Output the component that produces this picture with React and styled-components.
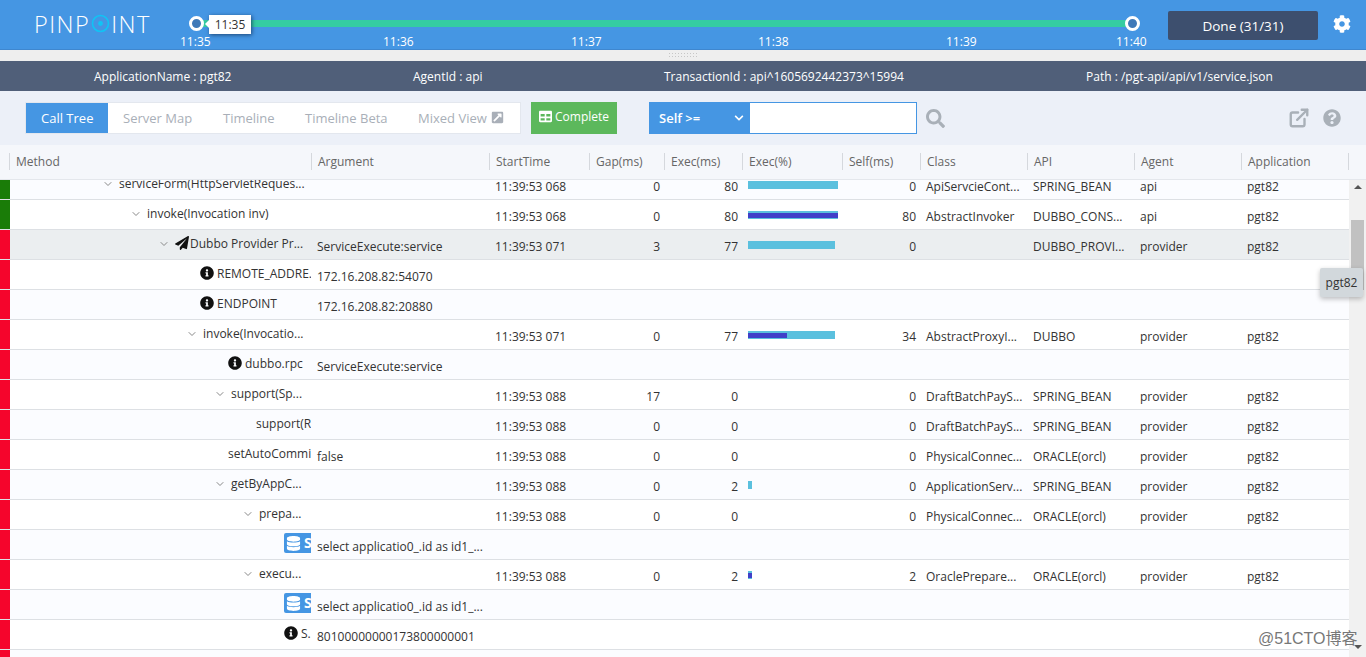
import styled, { createGlobalStyle } from 'styled-components'
import {
	FaCog,
	FaChevronDown,
	FaDatabase,
	FaExternalLinkSquareAlt,
	FaInfoCircle,
	FaPaperPlane,
	FaQuestionCircle,
	FaSearch,
	FaTable,
} from 'react-icons/fa'
import { FiExternalLink, FiChevronDown } from 'react-icons/fi'

const GlobalStyle = createGlobalStyle`
	* { box-sizing: border-box; }
	html, body { margin: 0; height: 100%; overflow: hidden; }
	body { font-family: 'Open Sans', 'Liberation Sans', sans-serif; font-size: 12px; color: #333; background: #fff; }
	#root { height: 100%; }
`

const COLUMNS = '302px 178px 100px 75px 78px 100px 78px 107px 107px 107px 107px'

const Page = styled.div`
	height: 100vh;
	display: flex;
	flex-direction: column;
	position: relative;
	overflow: hidden;
`

const TopBar = styled.header`
	height: 50px;
	flex: none;
	display: flex;
	background: #4596e3;
	border-bottom: 1px solid #3f87cf;
	padding-left: 35px;
`

const Logo = styled.div`
	width: 141px;
	height: 49px;
	display: flex;
	align-items: center;
	padding-bottom: 2px;
	margin-left: -1px;
	margin-right: 1px;
	color: #fff;
	font-family: 'Open Sans', sans-serif;
	font-weight: 300;
	font-size: 23.5px;
	letter-spacing: 1.45px;
	svg {
		margin: 0 1px;
	}
`

const Slider = styled.div`
	width: 977px;
	padding-top: 20px;
`

const Track = styled.div`
	position: relative;
	height: 7px;
	margin: 0 20px;
	width: 937px;
	background: #35cca2;
`

const Handle = styled.span`
	position: absolute;
	top: -4px;
	left: ${(props) => (props.$end ? '929px' : '-7px')};
	width: 15px;
	height: 15px;
	border-radius: 50%;
	border: 3px solid #fff;
	background: #3f79b8;
`

const TimeTip = styled.div`
	position: absolute;
	top: -5px;
	left: 13px;
	width: 42px;
	height: 19px;
	background: #fff;
	color: #333;
	font-size: 12px;
	line-height: 19px;
	text-align: center;
	box-shadow: 1px 1px 4px rgba(20, 50, 90, 0.8);
	&::before {
		content: '';
		position: absolute;
		left: -4px;
		top: 5px;
		border-style: solid;
		border-width: 4px 4px 4px 0;
		border-color: transparent #fff transparent transparent;
	}
`

const Ticks = styled.div`
	display: grid;
	grid-template-columns: 203px 188px 187px 188px 170px 40px;
	margin: 7px 0 0 4px;
	color: #fff;
	font-size: 12px;
	line-height: 16px;
`

const DoneButton = styled.button`
	width: 150px;
	height: 29px;
	margin: 11px 0 0 15px;
	border: none;
	border-radius: 2px;
	background: #3d4f6e;
	color: #fff;
	font-family: inherit;
	font-size: 13.5px;
`

const Gear = styled(FaCog)`
	margin: 15px 0 0 15px;
	color: #fff;
	font-size: 18px;
`

const Grabber = styled.div`
	height: 11px;
	flex: none;
	display: flex;
	justify-content: center;
	padding-top: 2px;
	background: #eeeeee;
	&::after {
		content: '';
		width: 31px;
		height: 6px;
		background-image: radial-gradient(#c6c6c6 1px, transparent 1px);
		background-size: 3px 3px;
	}
`

const InfoBar = styled.div`
	height: 30px;
	flex: none;
	display: grid;
	grid-template-columns: 319px 251px 422px auto;
	align-items: center;
	padding-left: 94px;
	background: #505f79;
	color: #fff;
	font-size: 12px;
`

const Toolbar = styled.div`
	height: 54px;
	flex: none;
	display: flex;
	align-items: flex-start;
	padding: 11px 25px 0 25px;
	background: #ecf0f8;
`

const Tabs = styled.div`
	width: 496px;
	height: 32px;
	display: flex;
	background: #fff;
	border: 1px solid #e3e7ee;
`

const Tab = styled.div`
	width: ${(props) => props.$width}px;
	padding-left: ${(props) => (props.$active ? 15 : props.$pad)}px;
	line-height: 31px;
	font-size: 13px;
	color: ${(props) => (props.$active ? '#fff' : '#a9afb8')};
	background: ${(props) => (props.$active ? '#4596e3' : 'transparent')};
	white-space: nowrap;
	svg {
		margin-left: 4px;
		font-size: 13px;
		vertical-align: -1px;
	}
`

const CompleteButton = styled.div`
	width: 86px;
	height: 32px;
	margin-left: 10px;
	padding-left: 8px;
	display: flex;
	gap: 3px;
	align-items: center;
	padding-bottom: 3px;
	background: #5cb85c;
	color: #fff;
	font-size: 12px;
`

const FilterSelect = styled.div`
	width: 101px;
	height: 32px;
	margin-left: 32px;
	padding: 0 6px 0 10px;
	display: flex;
	align-items: center;
	justify-content: space-between;
	background: #4596e3;
	color: #fff;
	font-size: 13px;
	font-weight: 600;
	svg {
		font-size: 10px;
	}
`

const FilterInput = styled.input`
	width: 167px;
	height: 32px;
	border: 1px solid #4596e3;
	border-left: none;
	background: #fff;
	outline: none;
`

const SearchIcon = styled(FaSearch)`
	margin: 7px 0 0 9px;
	font-size: 19px;
	color: #a9b0b8;
`

const RightIcons = styled.div`
	margin-left: auto;
	margin-top: 5px;
	padding-right: 0;
	display: flex;
	align-items: center;
	gap: 13px;
	color: #a9b0b8;
`

const GridHeader = styled.div`
	height: 35px;
	flex: none;
	display: grid;
	grid-template-columns: ${COLUMNS};
	margin: 0;
	padding-left: 10px;
	padding-right: 17px;
	background: #f5f7fb;
	border-bottom: 1px solid #e4e7ec;
`

const HeaderCell = styled.div`
	margin-top: 8px;
	height: 17px;
	margin-left: -1px;
	padding-left: 6px;
	border-left: 1px solid #d5d8dd;
	color: #666;
	font-size: 12px;
	line-height: 17px;
	&:last-child {
		border-right: 1px solid #d5d8dd;
	}
`

const GridBody = styled.div`
	flex: 1;
	min-height: 0;
	display: flex;
	overflow: hidden;
`

const RowList = styled.div`
	flex: 1;
	margin-top: -10px;
`

const Row = styled.div`
	height: 30px;
	display: grid;
	grid-template-columns: 10px ${COLUMNS};
	border-bottom: 1px solid #dde0e4;
	background: ${(props) => (props.$selected ? '#ebeef0' : props.$tint ? '#fbfcff' : '#fff')};
`

const Marker = styled.div`
	margin-bottom: -1px;
	background: ${(props) => (props.$ok ? '#1a7c08' : '#f5052c')};
	border-bottom: 1px solid #dde0e4;
`

const Cell = styled.div`
	padding: 9px 5px 0;
	line-height: 16px;
	font-size: 12px;
	color: #333;
	white-space: nowrap;
	overflow: hidden;
	text-align: ${(props) => (props.$right ? 'right' : 'left')};
`

const MethodCell = styled.div`
	padding: 6px 0 0 ${(props) => props.$indent}px;
	margin-right: 1px;
	display: flex;
	align-items: flex-start;
	line-height: 16px;
	font-size: 12px;
	color: #333;
	white-space: nowrap;
	overflow: hidden;
`

const Toggle = styled(FiChevronDown)`
	flex: none;
	width: 12px;
	height: 12px;
	margin: 2px 5px 0 0;
	color: #888;
`

const RowIcon = styled.span`
	flex: none;
	width: ${(props) => props.$width}px;
	font-size: 14px;
	line-height: 14px;
	color: #111;
`

const SqlBadge = styled.span`
	flex: none;
	height: 20px;
	margin-top: -3px;
	padding: 0 2px;
	display: inline-flex;
	align-items: center;
	gap: 3px;
	border-radius: 2px;
	background: #4596e3;
	color: #fff;
	font-weight: 700;
	font-size: 14px;
	svg {
		font-size: 15px;
	}
`

const BarCell = styled.div`
	padding: 11px 0 0 5px;
`

const Bar = styled.div`
	height: 8px;
	padding-top: 2px;
	background: #5bc0de;
`

const BarSelf = styled.div`
	height: 5px;
	background: #4040c8;
`

const Scrollbar = styled.div`
	width: 17px;
	flex: none;
	display: flex;
	flex-direction: column;
	align-items: center;
	background: #f1f1f1;
`

const ArrowUp = styled.span`
	margin-top: 5px;
	border-style: solid;
	border-width: 0 4px 4px 4px;
	border-color: transparent transparent #555 transparent;
`

const ArrowDown = styled.span`
	margin-top: auto;
	margin-bottom: 8px;
	border-style: solid;
	border-width: 4px 4px 0 4px;
	border-color: #555 transparent transparent transparent;
`

const Thumb = styled.div`
	width: 13px;
	height: 70px;
	margin-top: 31px;
	background: #c1c1c1;
`

const CellTip = styled.div`
	position: absolute;
	top: 268px;
	left: 1320px;
	width: 43px;
	height: 29px;
	border-radius: 2px;
	background: #d2d8dc;
	box-shadow: 0 2px 5px rgba(0, 0, 0, 0.25);
	color: #333;
	font-size: 12px;
	line-height: 29px;
	text-align: center;
`

const Watermark = styled.div`
	position: absolute;
	top: 629px;
	left: 1258px;
	font-family: 'Liberation Sans', 'Noto Sans CJK SC', sans-serif;
	font-size: 16px;
	line-height: 19px;
	color: #777;
	text-shadow: 0 0 2px #fff;
`

const ticks = ['11:35', '11:36', '11:37', '11:38', '11:39', '11:40']

const infoItems = [
	'ApplicationName : pgt82',
	'AgentId : api',
	'TransactionId : api^1605692442373^15994',
	'Path : /pgt-api/api/v1/service.json',
]

const tabs = [
	{ name: 'Call Tree', width: 82, active: true },
	{ name: 'Server Map', width: 100, pad: 15 },
	{ name: 'Timeline', width: 82, pad: 15 },
	{ name: 'Timeline Beta', width: 113, pad: 15 },
	{ name: 'Mixed View', width: 117, pad: 15, link: true },
]

const headers = ['Method', 'Argument', 'StartTime', 'Gap(ms)', 'Exec(ms)', 'Exec(%)', 'Self(ms)', 'Class', 'API', 'Agent', 'Application']

const SQL_ARG = 'select applicatio0_.id as id1_...'
const leaf = (text, indent, arg, icon = 'info') => ({ text, indent, arg, icon, leaf: true })
const call = (text, indent, time, gap, exec, self, cls, api, agent, extra = {}) => ({
	text,
	indent,
	time: `11:39:53 ${time}`,
	gap,
	exec,
	self,
	cls,
	api,
	agent,
	app: 'pgt82',
	toggle: true,
	...extra,
})

const rows = [
	call('serviceForm(HttpServletReques...', 92, '068', 0, 80, 0, 'ApiServcieCont...', 'SPRING_BEAN', 'api', { ok: true, bar: 90, own: 0 }),
	call('invoke(Invocation inv)', 120, '068', 0, 80, 80, 'AbstractInvoker', 'DUBBO_CONS...', 'api', { ok: true, bar: 90, own: 90 }),
	call('Dubbo Provider Pr...', 148, '071', 3, 77, 0, '', 'DUBBO_PROVI...', 'provider', {
		bar: 87,
		own: 0,
		selected: true,
		arg: 'ServiceExecute:service',
		plane: true,
	}),
	leaf('REMOTE_ADDRE.', 190, '172.16.208.82:54070'),
	leaf('ENDPOINT', 190, '172.16.208.82:20880'),
	call('invoke(Invocatio...', 176, '071', 0, 77, 34, 'AbstractProxyI...', 'DUBBO', 'provider', { bar: 87, own: 39 }),
	leaf('dubbo.rpc', 218, 'ServiceExecute:service'),
	call('support(Sp...', 204, '088', 17, 0, 0, 'DraftBatchPayS...', 'SPRING_BEAN', 'provider'),
	call('support(R', 246, '088', 0, 0, 0, 'DraftBatchPayS...', 'SPRING_BEAN', 'provider', { toggle: false }),
	call('setAutoCommi', 218, '088', 0, 0, 0, 'PhysicalConnec...', 'ORACLE(orcl)', 'provider', { toggle: false, arg: 'false' }),
	call('getByAppC...', 204, '088', 0, 2, 0, 'ApplicationServ...', 'SPRING_BEAN', 'provider', { bar: 4, own: 0 }),
	call('prepa...', 232, '088', 0, 0, 0, 'PhysicalConnec...', 'ORACLE(orcl)', 'provider'),
	leaf('SQL', 274, SQL_ARG, 'sql'),
	call('execu...', 232, '088', 0, 2, 2, 'OraclePrepare...', 'ORACLE(orcl)', 'provider', { bar: 4, own: 4 }),
	leaf('SQL', 274, SQL_ARG, 'sql'),
	leaf('S.', 274, '80100000000173800000001'),
	{ empty: true },
]

const MethodContent = ({ row }) => {
	if (row.empty) return null
	if (row.icon === 'sql') {
		return (
			<SqlBadge>
				<FaDatabase />
				{row.text}
			</SqlBadge>
		)
	}
	return (
		<>
			{row.toggle && <Toggle />}
			{row.plane && (
				<RowIcon $width={15}>
					<FaPaperPlane />
				</RowIcon>
			)}
			{row.icon === 'info' && (
				<RowIcon $width={17}>
					<FaInfoCircle />
				</RowIcon>
			)}
			{row.text}
		</>
	)
}

const App = () => {
	return (
		<Page>
			<GlobalStyle />
			<TopBar>
				<Logo>
					PINP
					<svg width="19" height="19" viewBox="0 0 19 19">
						<circle cx="9.5" cy="9.5" r="8" fill="none" stroke="#10c4f5" strokeWidth="1.6" />
						<circle cx="9.5" cy="9.5" r="2.4" fill="#10c4f5" />
					</svg>
					INT
				</Logo>
				<Slider>
					<Track>
						<Handle />
						<Handle $end />
						<TimeTip>11:35</TimeTip>
					</Track>
					<Ticks>
						{ticks.map((tick) => (
							<span key={tick}>{tick}</span>
						))}
					</Ticks>
				</Slider>
				<DoneButton>Done (31/31)</DoneButton>
				<Gear />
			</TopBar>
			<Grabber />
			<InfoBar>
				{infoItems.map((item) => (
					<span key={item}>{item}</span>
				))}
			</InfoBar>
			<Toolbar>
				<Tabs>
					{tabs.map((tab) => (
						<Tab key={tab.name} $width={tab.width} $active={tab.active} $pad={tab.pad}>
							{tab.name}
							{tab.link && <FaExternalLinkSquareAlt />}
						</Tab>
					))}
				</Tabs>
				<CompleteButton>
					<FaTable size={13} />
					Complete
				</CompleteButton>
				<FilterSelect>
					Self &gt;=
					<FaChevronDown />
				</FilterSelect>
				<FilterInput />
				<SearchIcon />
				<RightIcons>
					<FiExternalLink size={22} strokeWidth={2.6} />
					<FaQuestionCircle size={18} />
				</RightIcons>
			</Toolbar>
			<GridHeader>
				{headers.map((name) => (
					<HeaderCell key={name}>{name}</HeaderCell>
				))}
			</GridHeader>
			<GridBody>
				<RowList>
					{rows.map((row, idx) => (
						<Row key={idx} $selected={row.selected} $tint={idx % 2 === 0}>
							<Marker $ok={row.ok} />
							<MethodCell $indent={row.indent}>
								<MethodContent row={row} />
							</MethodCell>
							<Cell>{row.arg}</Cell>
							<Cell>{row.time}</Cell>
							<Cell $right>{row.gap}</Cell>
							<Cell $right>{row.exec}</Cell>
							<BarCell>
								{row.bar > 0 && (
									<Bar style={{ width: row.bar }}>
										{row.own > 0 && <BarSelf style={{ width: row.own }} />}
									</Bar>
								)}
							</BarCell>
							<Cell $right>{row.self}</Cell>
							<Cell>{row.cls}</Cell>
							<Cell>{row.api}</Cell>
							<Cell>{row.agent}</Cell>
							<Cell>{row.app}</Cell>
						</Row>
					))}
				</RowList>
				<Scrollbar>
					<ArrowUp />
					<Thumb />
					<ArrowDown />
				</Scrollbar>
			</GridBody>
			<CellTip>pgt82</CellTip>
			<Watermark>@51CTO博客</Watermark>
		</Page>
	)
}

export default App
